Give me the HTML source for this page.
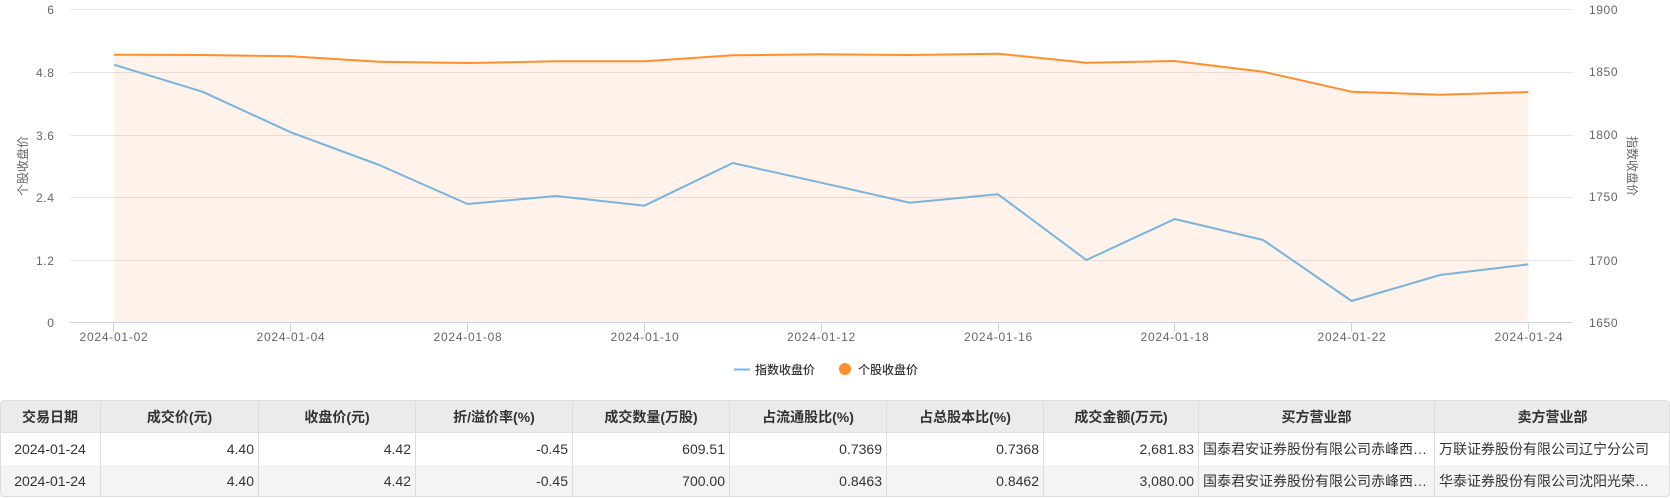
<!DOCTYPE html>
<html lang="zh">
<head>
<meta charset="utf-8">
<title>大宗交易</title>
<style>
html,body{margin:0;padding:0;background:#fff;}
body{width:1670px;height:498px;position:relative;overflow:hidden;font-family:"Liberation Sans","Noto Sans CJK SC",sans-serif;color:#333;}
svg{position:absolute;left:0;top:0;}
svg text{font-family:"Liberation Sans","Noto Sans CJK SC",sans-serif;font-size:12px;fill:#666;}
svg text.x{letter-spacing:.75px;text-anchor:middle;}
svg text.l{letter-spacing:.6px;text-anchor:end;}
svg text.r{letter-spacing:.6px;}
svg text.leg{fill:#333;font-weight:500;}
.wrap{position:absolute;left:0;top:400px;width:1670px;height:97px;box-sizing:border-box;border:1px solid #ddd;border-left:1px solid #ddd;border-radius:4px;overflow:hidden;}
table{position:absolute;left:-1px;top:-1px;border-collapse:separate;border-spacing:0;table-layout:fixed;width:1670px;font-size:14px;}
th,td{box-sizing:border-box;border-right:1px solid #ddd;padding:0 4px;white-space:nowrap;overflow:hidden;text-overflow:ellipsis;text-align:right;font-weight:normal;}
th:last-child,td:last-child{border-right:0;}
td:last-child{padding-right:15px;}
th{height:33px;background:#ebebeb;text-align:center;font-weight:bold;border-bottom:1px solid #ddd;border-top:1px solid #ddd;}
td{height:32px;}
tr.a td{background:#f4f4f4;}
td.c{text-align:center;}
td.t{text-align:left;}
</style>
</head>
<body>
<svg width="1670" height="400" viewBox="0 0 1670 400">
  <!-- grid -->
  <g stroke="#e6e6e6" stroke-width="1">
    <line x1="70" x2="1573" y1="9.5" y2="9.5"/>
    <line x1="70" x2="1573" y1="72.5" y2="72.5"/>
    <line x1="70" x2="1573" y1="135.5" y2="135.5"/>
    <line x1="70" x2="1573" y1="197.5" y2="197.5"/>
    <line x1="70" x2="1573" y1="260.5" y2="260.5"/>
  </g>
  <!-- area -->
  <polygon fill="#f78a3f" fill-opacity=".11" points="114,54.7 202.4,55 290.8,56.3 379.2,61.7 467.6,63 556,61.3 644.4,61.3 732.8,55.3 821.2,54.3 909.6,55 998,53.7 1086.4,62.7 1174.8,61 1263.2,71.7 1351.6,91.7 1440,94.7 1528.4,92 1528.4,322 114,322"/>
  <!-- axis -->
  <line x1="70" x2="1573" y1="322.5" y2="322.5" stroke="#c9d6ec"/>
  <g stroke="#c9d6ec">
    <line x1="113.5" x2="113.5" y1="322" y2="332"/>
    <line x1="290.5" x2="290.5" y1="322" y2="332"/>
    <line x1="467.5" x2="467.5" y1="322" y2="332"/>
    <line x1="644.5" x2="644.5" y1="322" y2="332"/>
    <line x1="821.5" x2="821.5" y1="322" y2="332"/>
    <line x1="998.5" x2="998.5" y1="322" y2="332"/>
    <line x1="1174.5" x2="1174.5" y1="322" y2="332"/>
    <line x1="1351.5" x2="1351.5" y1="322" y2="332"/>
    <line x1="1528.5" x2="1528.5" y1="322" y2="332"/>
  </g>
  <!-- lines -->
  <polyline fill="none" stroke="#7ab3dc" stroke-width="2" stroke-linejoin="round" points="114,64.7 202.4,91.7 290.8,132.3 379.2,165 467.6,204 556,196 644.4,205.7 732.8,163 821.2,182.7 909.6,202.7 998,194.3 1086.4,260 1174.8,219 1263.2,240 1351.6,301 1440,275 1528.4,264.3"/>
  <polyline fill="none" stroke="#ff8f2e" stroke-width="2" stroke-linejoin="round" points="114,54.7 202.4,55 290.8,56.3 379.2,61.7 467.6,63 556,61.3 644.4,61.3 732.8,55.3 821.2,54.3 909.6,55 998,53.7 1086.4,62.7 1174.8,61 1263.2,71.7 1351.6,91.7 1440,94.7 1528.4,92"/>
  <!-- left labels -->
  <text class="l" x="54.5" y="14">6</text>
  <text class="l" x="54.5" y="77">4.8</text>
  <text class="l" x="54.5" y="140">3.6</text>
  <text class="l" x="54.5" y="202">2.4</text>
  <text class="l" x="54.5" y="265">1.2</text>
  <text class="l" x="54.5" y="327">0</text>
  <!-- right labels -->
  <text class="r" x="1589" y="14">1900</text>
  <text class="r" x="1589" y="76">1850</text>
  <text class="r" x="1589" y="139">1800</text>
  <text class="r" x="1589" y="201">1750</text>
  <text class="r" x="1589" y="265">1700</text>
  <text class="r" x="1589" y="327">1650</text>
  <!-- x labels -->
  <text class="x" x="114" y="341">2024-01-02</text>
  <text class="x" x="291" y="341">2024-01-04</text>
  <text class="x" x="468" y="341">2024-01-08</text>
  <text class="x" x="645" y="341">2024-01-10</text>
  <text class="x" x="821.5" y="341">2024-01-12</text>
  <text class="x" x="998.5" y="341">2024-01-16</text>
  <text class="x" x="1175" y="341">2024-01-18</text>
  <text class="x" x="1352" y="341">2024-01-22</text>
  <text class="x" x="1529" y="341">2024-01-24</text>
  <!-- axis titles -->
  <text x="0" y="0" transform="translate(27,166) rotate(-90)" text-anchor="middle">个股收盘价</text>
  <text x="0" y="0" transform="translate(1628,166) rotate(90)" text-anchor="middle">指数收盘价</text>
  <!-- legend -->
  <line x1="734" x2="750" y1="369.5" y2="369.5" stroke="#6cb8f0" stroke-width="2"/>
  <text class="leg" x="755" y="374">指数收盘价</text>
  <circle cx="845" cy="369" r="6" fill="#ff8f2e"/>
  <text class="leg" x="858" y="374">个股收盘价</text>
</svg>
<div class="wrap">
<table>
<colgroup>
<col style="width:101px"><col style="width:158px"><col style="width:157px"><col style="width:157px"><col style="width:157px"><col style="width:157px"><col style="width:157px"><col style="width:155px"><col style="width:236px"><col style="width:235px">
</colgroup>
<tr><th>交易日期</th><th>成交价(元)</th><th>收盘价(元)</th><th>折/溢价率(%)</th><th>成交数量(万股)</th><th>占流通股比(%)</th><th>占总股本比(%)</th><th>成交金额(万元)</th><th>买方营业部</th><th>卖方营业部</th></tr>
<tr><td class="c">2024-01-24</td><td>4.40</td><td>4.42</td><td>-0.45</td><td>609.51</td><td>0.7369</td><td>0.7368</td><td>2,681.83</td><td class="t">国泰君安证券股份有限公司赤峰西路证券营业部</td><td class="t">万联证券股份有限公司辽宁分公司</td></tr>
<tr class="a"><td class="c">2024-01-24</td><td>4.40</td><td>4.42</td><td>-0.45</td><td>700.00</td><td>0.8463</td><td>0.8462</td><td>3,080.00</td><td class="t">国泰君安证券股份有限公司赤峰西路证券营业部</td><td class="t">华泰证券股份有限公司沈阳光荣街证券营业部</td></tr>
</table>
</div>
</body>
</html>
